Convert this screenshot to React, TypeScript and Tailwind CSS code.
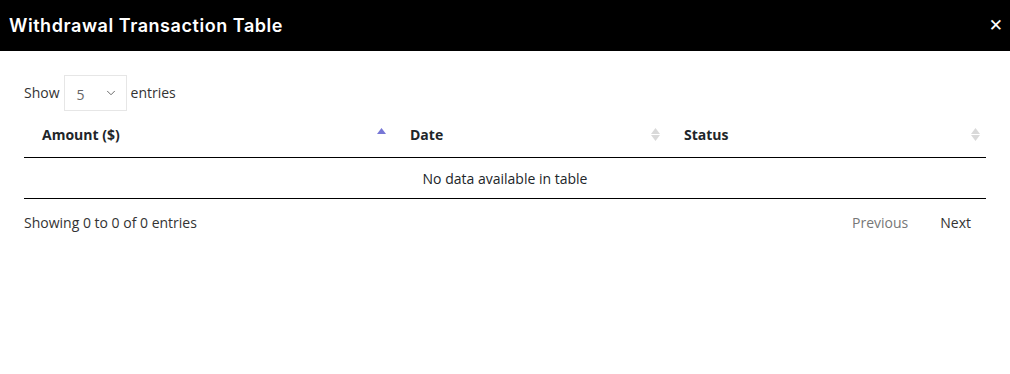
import { ChevronDown } from "lucide-react";

const SortIcon = ({ active }: { active?: boolean }) => (
  <span className="flex flex-col items-center gap-[1px]">
    <svg width="9" height="6" viewBox="0 0 9 6">
      <path d="M4.5 0L9 6H0z" fill={active ? "#7777d6" : "#d9d9d9"} />
    </svg>
    <svg width="9" height="6" viewBox="0 0 9 6">
      <path d="M0 0H9L4.5 6z" fill={active ? "#ffffff" : "#d9d9d9"} />
    </svg>
  </span>
);

const App = () => {
  const columns = [
    { label: "Amount ($)", width: "w-[368px]", active: true },
    { label: "Date", width: "w-[274px]" },
    { label: "Status", width: "flex-1" },
  ];

  return (
    <div className="w-[1010px] h-[374px] bg-white font-['Open_Sans',sans-serif] text-[14px] text-[#333]">
      <div className="h-[51px] bg-black flex items-center justify-between pl-[9px] pr-[7px]">
        <h1 className="text-white text-[18px] font-semibold font-['Inter',sans-serif] tracking-[0.55px]">
          Withdrawal Transaction Table
        </h1>
        <span className="text-white font-bold text-[17px] leading-none font-['DejaVu_Sans',sans-serif]">✕</span>
      </div>

      <div className="px-[24px] pt-[24px]">
        <div className="flex items-center gap-[4px]">
          <span className="-mt-[2px]">Show</span>
          <div className="w-[63px] h-[36px] border border-[#e6e6e6] flex items-center justify-between pl-[12px] pr-[8px] text-[#666]">
            <span className="mt-[3px]">5</span>
            <ChevronDown className="w-[14px] h-[14px] text-[#555]" strokeWidth={1.5} />
          </div>
          <span className="-mt-[2px]">entries</span>
        </div>

        <div className="mt-[3px] border-b border-black flex h-[44px] pb-[3px]">
          {columns.map((c) => (
            <div key={c.label} className={`${c.width} flex items-center justify-between pl-[18px] pr-[6px]`}>
              <span className="font-bold text-[#212529]">{c.label}</span>
              <SortIcon active={c.active} />
            </div>
          ))}
        </div>

        <div className="h-[41px] border-b border-black flex items-center justify-center text-[#212529]">
          No data available in table
        </div>

        <div className="flex items-center justify-between mt-[13px]">
          <span className="text-[#333]">Showing 0 to 0 of 0 entries</span>
          <div className="flex items-center gap-[32px] pr-[15px]">
            <span className="text-[#777]">Previous</span>
            <span className="text-[#333]">Next</span>
          </div>
        </div>
      </div>
    </div>
  );
};

export default App;
